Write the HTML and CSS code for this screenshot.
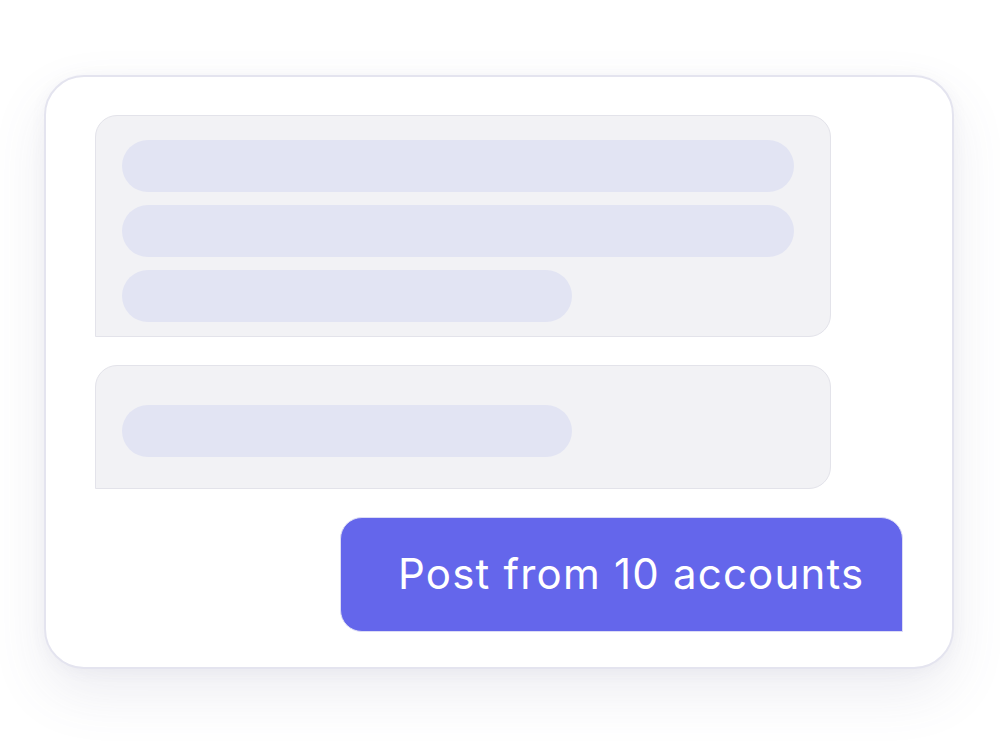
FILE: index.html
```html
<!DOCTYPE html>
<html>
<head>
<meta charset="utf-8">
<link rel="stylesheet" href="styles.css">
</head>
<body>
<div class="stage">
  <div class="card">
    <div class="bubble bubble-one">
      <div class="bar"></div>
      <div class="bar"></div>
      <div class="bar short"></div>
    </div>
    <div class="bubble bubble-two">
      <div class="bar short"></div>
    </div>
    <div class="actions">
      <div class="post-btn">Post from 10 accounts</div>
    </div>
  </div>
</div>
</body>
</html>
```
FILE: styles.css
```css
html, body {
  margin: 0;
  padding: 0;
  background: #ffffff;
}
body {
  font-family: Inter, "Noto Sans", sans-serif;
}
.stage {
  width: 1000px;
  height: 747px;
  padding: 75px 0 0 44px;
  box-sizing: border-box;
}
.card {
  width: 910px;
  height: 594px;
  box-sizing: border-box;
  background: #ffffff;
  border: 2px solid #e4e4ef;
  border-radius: 40px;
  box-shadow: 0 24px 56px rgba(90, 90, 140, 0.11), 0 2px 16px rgba(90, 90, 140, 0.05);
  padding: 38px 0 0 49px;
  display: flex;
  flex-direction: column;
}
.bubble {
  width: 736px;
  box-sizing: border-box;
  background: #f2f2f5;
  border: 1.5px solid #e3e3ea;
  border-radius: 22px 22px 22px 0;
  display: flex;
  flex-direction: column;
  gap: 13px;
  padding-left: 26px;
}
.bubble-one {
  height: 222px;
  padding-top: 24px;
}
.bubble-two {
  height: 124px;
  margin-top: 28px;
  padding-top: 39px;
}
.bar {
  width: 672px;
  height: 52px;
  border-radius: 26px;
  background: #e2e4f3;
}
.bar.short {
  width: 450px;
}
.actions {
  display: flex;
  justify-content: flex-end;
  padding-right: 49px;
  margin-top: 28px;
}
.post-btn {
  width: 563px;
  height: 115px;
  box-sizing: border-box;
  background: #6466eb;
  border: 1.5px solid #dcdcf5;
  border-radius: 22px 22px 0 22px;
  color: #ffffff;
  font-size: 42px;
  font-weight: 400;
  display: flex;
  align-items: center;
  padding-left: 57px;
  padding-bottom: 2px;
  letter-spacing: 1.2px;
}
```
